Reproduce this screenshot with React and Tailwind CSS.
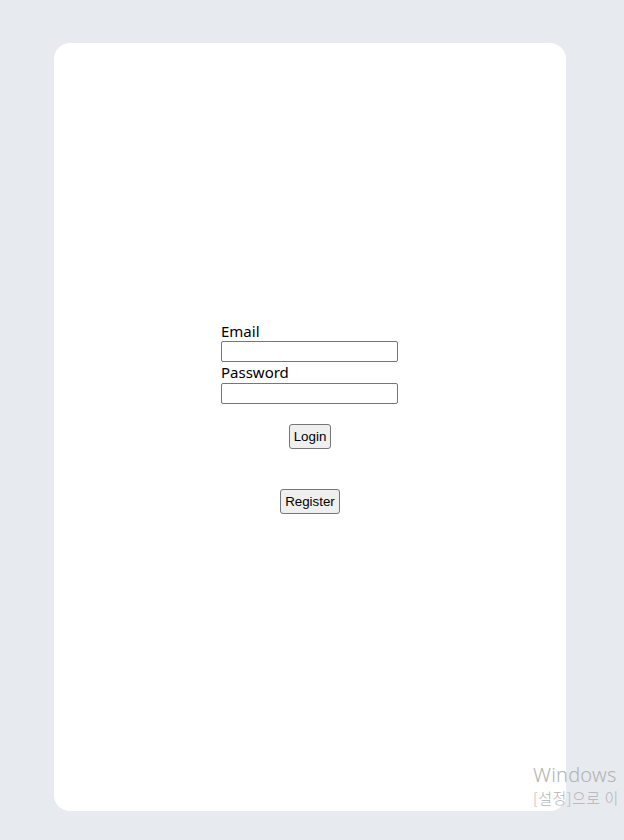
export default function App() {
  return (
    <div className="relative min-h-[840px] w-[624px] bg-[#e7eaee] pt-[43px] pl-[54px] overflow-hidden">
      <div className="w-[512px] h-[768px] bg-white rounded-2xl flex flex-col items-center pt-[278px]">
        <div className="flex flex-col w-[178px] text-black" style={{ fontFamily: '"Noto Sans", "Open Sans", sans-serif' }}>
          <label className="text-[15px] leading-[21px] h-[20px]">Email</label>
          <input className="w-[177px] h-[21px] border border-[#767676] rounded-[2px] bg-white outline-none" />
          <label className="text-[15px] leading-[21px] h-[21px]">Password</label>
          <input type="password" className="w-[177px] h-[21px] border border-[#767676] rounded-[2px] bg-white outline-none" />
        </div>
        <button
          className="mt-[20px] h-[25px] px-[4px] border border-[#767676] rounded-[3px] bg-[#efefef] text-[13.33px] text-black"
          style={{ fontFamily: '"Liberation Sans", Arial, sans-serif' }}
        >
          Login
        </button>
        <button
          className="mt-[40px] h-[25px] px-[4px] border border-[#767676] rounded-[3px] bg-[#efefef] text-[13.33px] text-black"
          style={{ fontFamily: '"Liberation Sans", Arial, sans-serif' }}
        >
          Register
        </button>
      </div>
      <div
        className="absolute left-[533px] top-[762px] text-[#b3b3b3] pointer-events-none"
        style={{ fontFamily: '"Noto Sans", "Noto Sans CJK KR", sans-serif' }}
      >
        <div className="text-[20px] leading-[26px] font-light whitespace-nowrap tracking-[0.2px]">Windows</div>
        <div className="text-[15px] leading-[20px] font-light whitespace-nowrap tracking-[0.5px]" style={{ fontFamily: '"Noto Sans CJK KR", sans-serif' }}>[설정]으로 이</div>
      </div>
    </div>
  );
}
